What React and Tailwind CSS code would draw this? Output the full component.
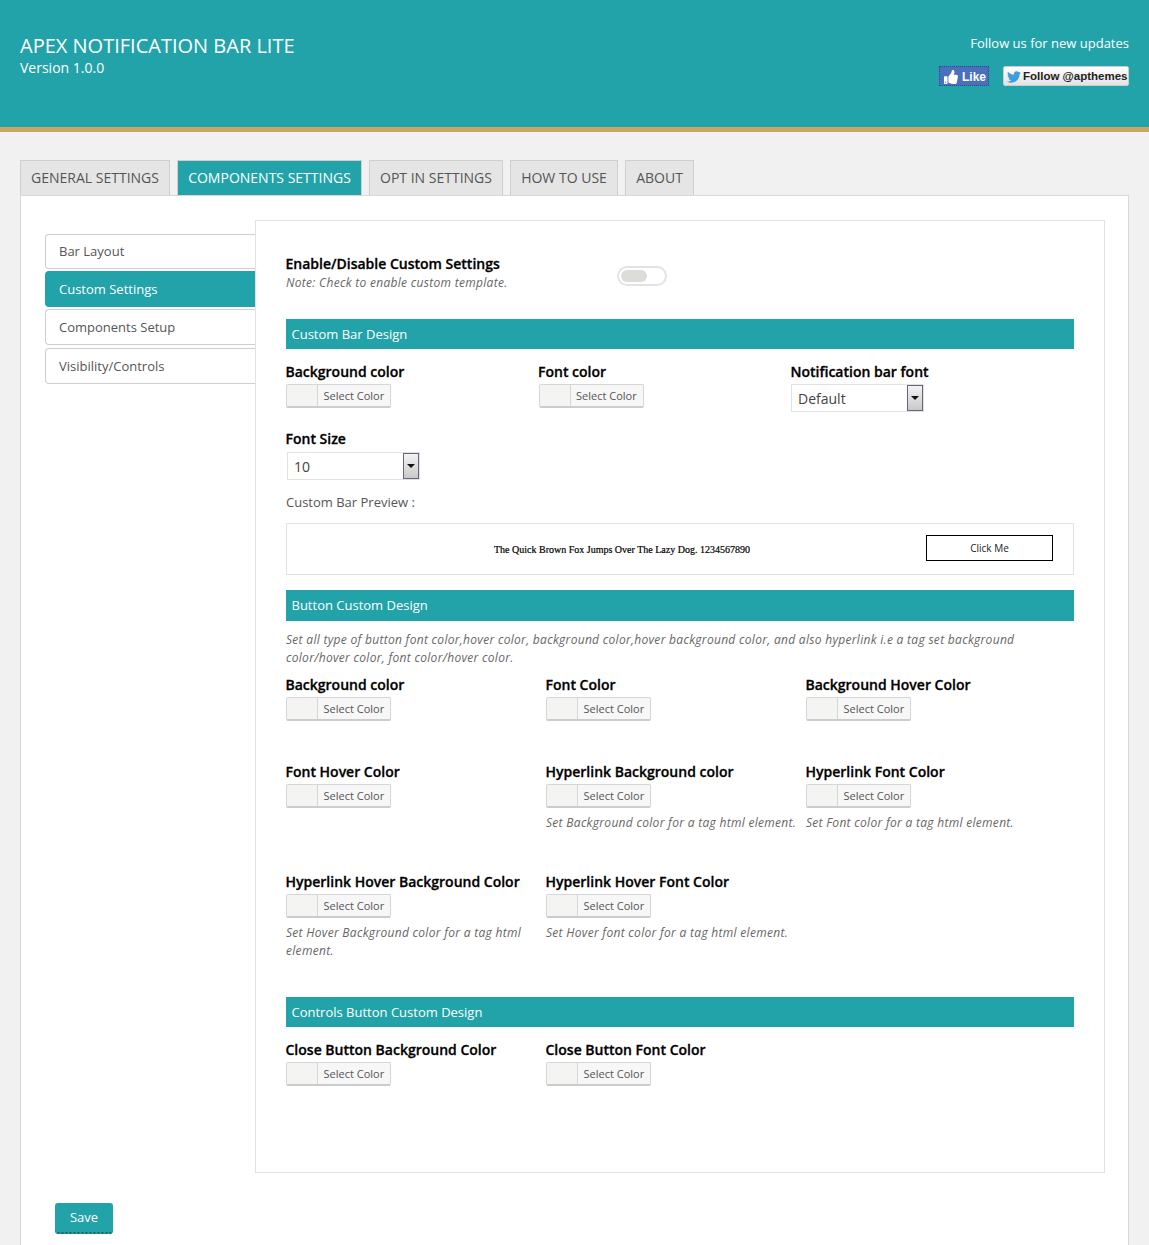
import React from 'react';
import { FaThumbsUp, FaTwitter } from 'react-icons/fa';

const tabs = [
  { label: 'GENERAL SETTINGS', width: 'w-[150px]' },
  { label: 'COMPONENTS SETTINGS', width: 'w-[185px]', active: true },
  { label: 'OPT IN SETTINGS', width: 'w-[134px]' },
  { label: 'HOW TO USE', width: 'w-[108px]' },
  { label: 'ABOUT', width: 'w-[69px]' },
];

const ColorPicker = () => (
  <div className="flex h-[24px] w-[105px] rounded-[2px] border border-[#d6d6d6] border-b-[2px] border-b-[#cccccc] bg-[#f7f7f7] text-[11px] leading-[22px] text-[#555]">
    <span className="w-[31px] border-r border-[#d6d6d6] bg-[#f4f4f2]" />
    <span className="flex-1 pl-[5.5px]">Select Color</span>
  </div>
);

const Label = ({ children }) => (
  <div className="-ml-[0.5px] text-[14px] font-semibold leading-[18px] text-black [-webkit-text-stroke:0.3px_black]">{children}</div>
);

const Note = ({ children, className = '' }) => (
  <p className={`text-[12px] italic leading-[18px] tracking-[0.3px] text-[#666] ${className}`}>{children}</p>
);

const Field = ({ label, note }) => (
  <div>
    <Label>{label}</Label>
    <div className="mt-[3px]"><ColorPicker /></div>
    {note && <Note className="mt-[6px]">{note}</Note>}
  </div>
);

const SectionBar = ({ children, className = '' }) => (
  <div className={`bg-[#22a3a9] pl-[5.5px] text-[13px] font-normal text-white ${className}`}>{children}</div>
);

const SelectBox = ({ value, width }) => (
  <div className={`flex h-[28px] items-center justify-between border border-[#e2e2e2] pl-[6px] pr-0 text-[14px] text-[#444] ${width}`}>
    <span>{value}</span>
    <span className="flex h-[26px] w-[16px] items-center justify-center border border-[#6b6280] bg-gradient-to-b from-[#f3f3f3] to-[#c9c9c9]">
      <svg width="8" height="4" viewBox="0 0 8 4"><path d="M0 0h8L4 4z" fill="#111" /></svg>
    </span>
  </div>
);

export default function App() {
  return (
    <div className="flex h-[1245px] flex-col overflow-hidden bg-[#f1f1f1] font-['Open_Sans',sans-serif]">
      <header className="flex h-[132px] shrink-0 justify-between border-b-[5px] border-[#c9a661] bg-[#22a3a9] px-[20px] text-white">
        <div className="pt-[33px]">
          <h1 className="text-[20px] leading-[25px] font-normal">APEX NOTIFICATION BAR LITE</h1>
          <p className="text-[14px] leading-[19px]">Version 1.0.0</p>
        </div>
        <div className="flex flex-col items-end pt-[34px]">
          <p className="text-[13px] leading-[18px]">Follow us for new updates</p>
          <div className="mt-[14px] flex gap-[14px] font-['Liberation_Sans',sans-serif] font-bold">
            <span className="flex h-[20px] w-[50px] items-center gap-[4px] bg-[#4a6fbb] pl-[5px] pt-[1px] text-[12px] outline-1 -outline-offset-1 outline-dotted outline-[#2f4a8a]">
              <FaThumbsUp className="text-[14px]" />Like
            </span>
            <span className="flex h-[20px] w-[126px] items-center gap-[2px] whitespace-nowrap rounded-[2px] border border-[#ccc] bg-gradient-to-b from-white to-[#e3e3e3] pl-[3px] pt-[1px] text-[11.5px] text-[#222]">
              <FaTwitter className="shrink-0 text-[14px] text-[#3f9fdc]" />Follow @apthemes
            </span>
          </div>
        </div>
      </header>

      <main className="flex flex-col px-[20px] pt-[28px]">
        <nav className="flex gap-[7px]">
          {tabs.map(tab => (
            <span
              key={tab.label}
              className={`${tab.width} h-[35px] border border-b-0 border-[#cfcfcf] text-center text-[14px] leading-[33px] ${
                tab.active ? 'bg-[#22a3a9] text-white' : 'bg-[#e5e5e5] text-[#555]'
              }`}
            >
              {tab.label}
            </span>
          ))}
        </nav>

        <div className="h-[1100px] shrink-0 border border-[#d8d8d8] bg-white pl-[24px] pr-[23px] pt-[24px]">
          <div className="flex">
            <aside className="w-[210px] shrink-0 pt-[14px] text-[13px]">
              <div className="flex h-[35px] items-center rounded-l-[4px] border border-r-0 border-[#cfcfcf] pl-[13px] text-[#555]">Bar Layout</div>
              <div className="mt-[2px] flex h-[36px] items-center rounded-l-[4px] bg-[#22a3a9] pl-[14px] pt-[2px] text-white">Custom Settings</div>
              <div className="mt-[2px] flex h-[36px] items-center rounded-l-[4px] border border-r-0 border-[#cfcfcf] pl-[13px] pt-[2px] text-[#555]">Components Setup</div>
              <div className="mt-[3px] flex h-[36px] items-center rounded-l-[4px] border border-r-0 border-[#cfcfcf] pl-[13px] pt-[2px] text-[#555]">Visibility/Controls</div>
            </aside>

            <section className="h-[953px] flex-1 border border-[#e2e2e2] px-[30px] pt-[34px]">
              <div className="flex h-[64px] items-start">
                <div className="w-[331px]">
                  <Label>Enable/Disable Custom Settings</Label>
                  <Note className="mt-[1px]">Note: Check to enable custom template.</Note>
                </div>
                <span className="mt-[11px] flex h-[20px] w-[50px] items-center rounded-full border-[2px] border-[#e3e3e3] pl-[2px]">
                  <span className="h-[12px] w-[26px] rounded-full bg-[#dcdcd8]" />
                </span>
              </div>

              <SectionBar className="h-[30px] leading-[30px]">Custom Bar Design</SectionBar>

              <div className="mt-[14px] grid grid-cols-[252.5px_252.5px_1fr]">
                <Field label="Background color" />
                <Field label="Font color" />
                <div>
                  <Label>Notification bar font</Label>
                  <div className="mt-[3px]"><SelectBox value="Default" width="w-[133px]" /></div>
                </div>
              </div>

              <div className="mt-[18px] pl-[1px]">
                <div className="-ml-[1px]"><Label>Font Size</Label></div>
                <div className="mt-[4px]"><SelectBox value="10" width="w-[133px]" /></div>
              </div>

              <p className="mt-[13px] text-[13px] leading-[18px] text-[#555]">Custom Bar Preview :</p>

              <div className="mt-[12px] flex h-[52px] items-center border border-[#e2e2e2] pl-[207px] pr-[20px]">
                <span className="font-['Liberation_Serif',serif] text-[10px] font-normal text-black [-webkit-text-stroke:0.2px_black]">The Quick Brown Fox Jumps Over The Lazy Dog. 1234567890</span>
                <span className="mb-[2px] ml-auto flex h-[26px] w-[127px] items-center justify-center border border-black text-[10px] text-[#222]">Click Me</span>
              </div>

              <SectionBar className="mt-[15px] h-[31px] leading-[31px]">Button Custom Design</SectionBar>

              <Note className="mt-[10px]">Set all type of button font color,hover color, background color,hover background color, and also hyperlink i.e a tag set background color/hover color, font color/hover color.</Note>

              <div className="mt-[9px] grid grid-cols-[260px_260px_1fr]">
                <div className="h-[87px]"><Field label="Background color" /></div>
                <Field label="Font Color" />
                <Field label="Background Hover Color" />
                <div className="h-[110px]"><Field label="Font Hover Color" /></div>
                <Field label="Hyperlink Background color" note="Set Background color for a tag html element." />
                <Field label="Hyperlink Font Color" note="Set Font color for a tag html element." />
                <Field label="Hyperlink Hover Background Color" note="Set Hover Background color for a tag html element." />
                <Field label="Hyperlink Hover Font Color" note="Set Hover font color for a tag html element." />
              </div>

              <SectionBar className="mt-[37px] h-[30px] leading-[30px]">Controls Button Custom Design</SectionBar>

              <div className="mt-[14px] grid grid-cols-[260px_260px_1fr]">
                <Field label="Close Button Background Color" />
                <Field label="Close Button Font Color" />
              </div>
            </section>
          </div>

          <button className="ml-[10px] mt-[30px] h-[31px] w-[58px] rounded-[3px] border-b-[2px] border-dotted border-b-[#14666a] bg-[#22a3a9] text-[13px] text-white">Save</button>
        </div>
      </main>
    </div>
  );
}
